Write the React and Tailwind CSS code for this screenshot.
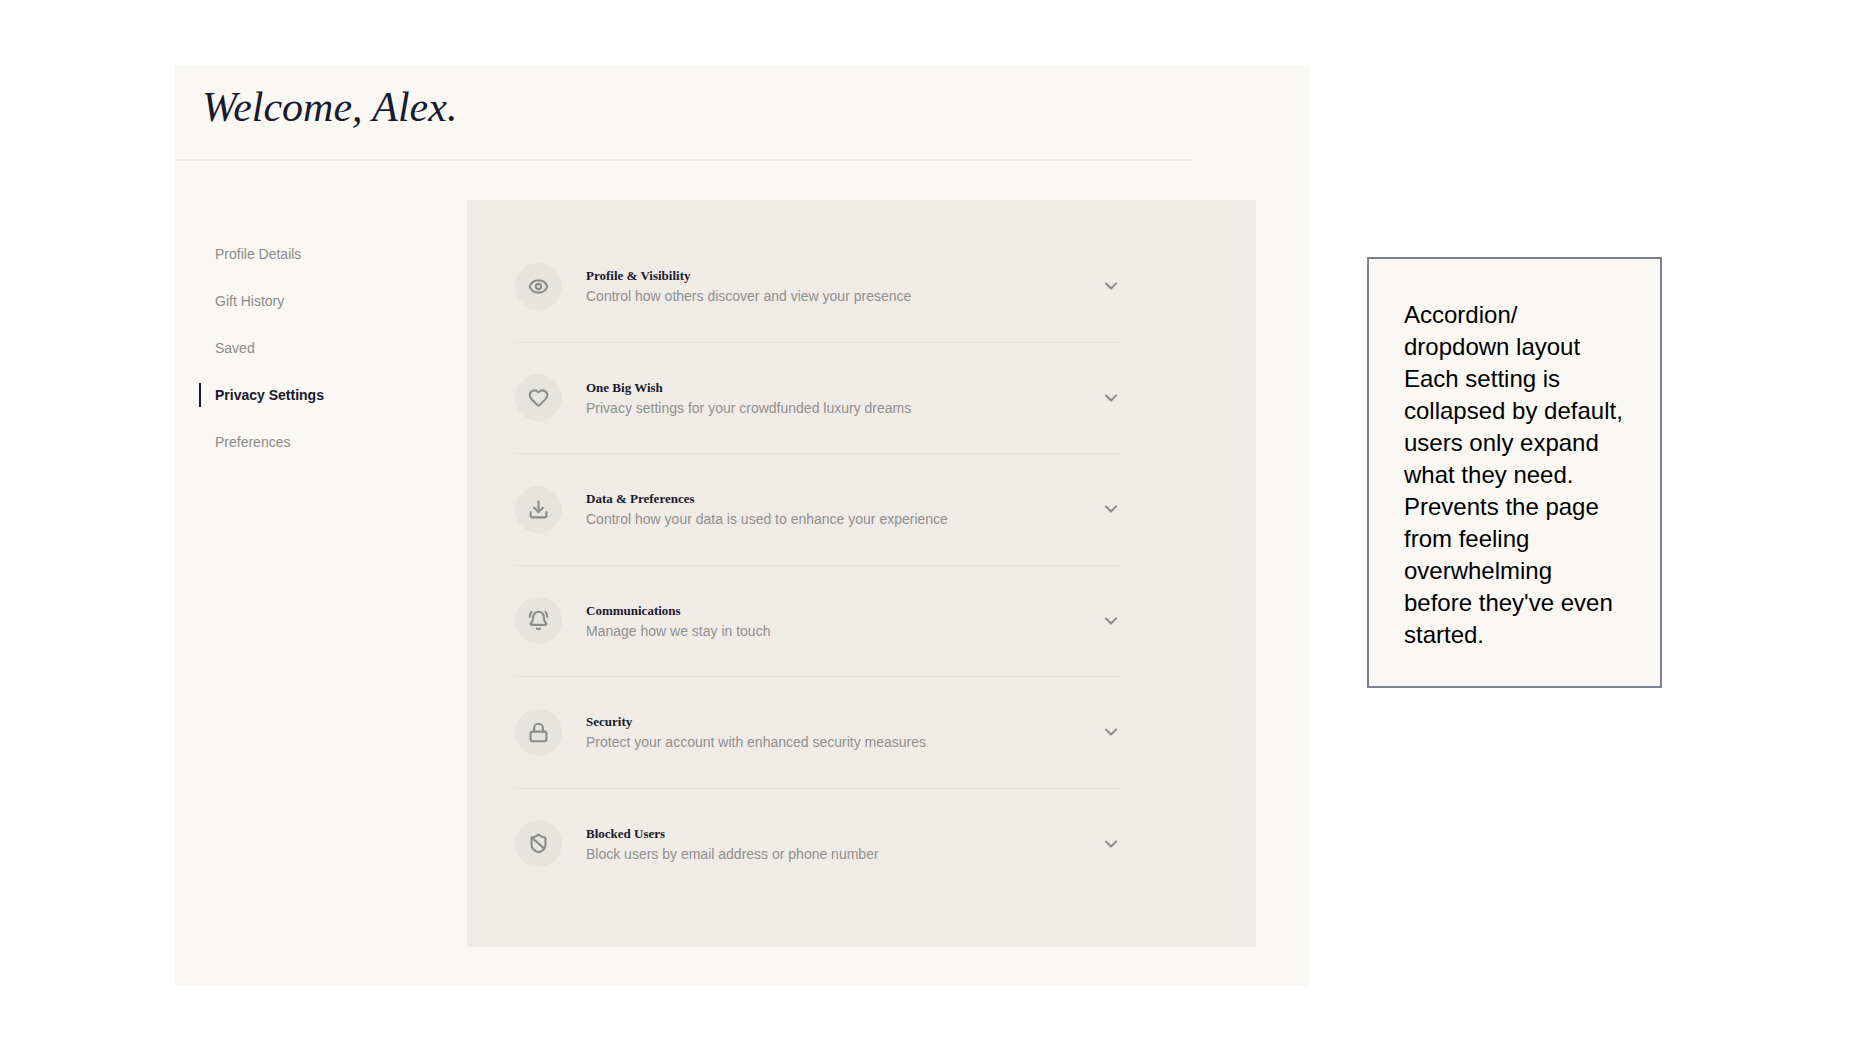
import React, { useState } from 'react';
import { BellRing, ChevronDown, Download, Eye, Heart, Lock, ShieldBan } from 'lucide-react';

const NAV_ITEMS = ['Profile Details', 'Gift History', 'Saved', 'Privacy Settings', 'Preferences'];

const SETTINGS = [
  { icon: Eye, title: 'Profile & Visibility', description: 'Control how others discover and view your presence' },
  { icon: Heart, title: 'One Big Wish', description: 'Privacy settings for your crowdfunded luxury dreams' },
  { icon: Download, title: 'Data & Preferences', description: 'Control how your data is used to enhance your experience' },
  { icon: BellRing, title: 'Communications', description: 'Manage how we stay in touch' },
  { icon: Lock, title: 'Security', description: 'Protect your account with enhanced security measures' },
  { icon: ShieldBan, title: 'Blocked Users', description: 'Block users by email address or phone number' },
];

const NOTE_LINES = [
  'Accordion/',
  'dropdown layout',
  'Each setting is',
  'collapsed by default,',
  'users only expand',
  'what they need.',
  'Prevents the page',
  'from feeling',
  'overwhelming',
  "before they've even",
  'started.',
];

function SideNav({ active, onSelect }) {
  return (
    <nav className="w-[292px] shrink-0 pt-[42px] pl-6">
      <ul className="flex flex-col gap-[23px]">
        {NAV_ITEMS.map((item) => (
          <li key={item}>
            <a
              href="#"
              onClick={() => onSelect(item)}
              className={
                item === active
                  ? 'flex h-6 items-center border-l-2 border-[#1a1a2e] pl-[14px] text-sm font-semibold text-[#1a1a2e]'
                  : 'flex h-6 items-center border-l-2 border-transparent pl-[14px] text-sm font-medium text-[#8b8b8a]'
              }
            >
              {item}
            </a>
          </li>
        ))}
      </ul>
    </nav>
  );
}

function SettingRow({ icon: Icon, title, description, open, onToggle }) {
  return (
    <li className="flex border-b border-[#e5e3df] last:border-transparent">
      <button type="button" aria-expanded={open} onClick={onToggle} className="flex w-full items-center text-left">
        <span className="flex size-[47px] shrink-0 items-center justify-center rounded-full bg-[#e6e4df]">
          <Icon size={21} strokeWidth={2.4} className="text-[#8b8b8a]" />
        </span>
        <span className="ml-6 flex flex-1 flex-col">
          <span className="font-['Liberation_Serif',serif] text-[13px] leading-[21px] font-bold text-[#1a1a2e]">{title}</span>
          <span className="text-sm leading-[21px] text-[#8f8f8e]">{description}</span>
        </span>
        <ChevronDown size={20} strokeWidth={2.4} className={open ? 'rotate-180 text-[#8b8b8a]' : 'text-[#8b8b8a]'} />
      </button>
    </li>
  );
}

export default function App() {
  const [active, setActive] = useState('Privacy Settings');
  const [openRow, setOpenRow] = useState(null);

  return (
    <div className="flex min-h-screen items-start gap-[58px] bg-white pt-[65px] pr-[210px] pb-[65px] pl-[175px] font-['Liberation_Sans',sans-serif]">
      <main className="flex-1 bg-[#f9f8f4] pb-[39px]">
        <header className="mr-[117px] border-b-2 border-[#e9e8e4] pt-[15px] pb-[25px] pl-[27px]">
          <h1 className="font-['Liberation_Serif',serif] text-[42px] leading-[54px] text-[#1a1a2e] italic">Welcome, Alex.</h1>
        </header>

        <div className="flex pt-[39px] pr-[53px]">
          <SideNav active={active} onSelect={setActive} />
          <section className="flex-1 rounded-xs bg-[#efece7] pt-[31px] pr-[135px] pb-[47px] pl-12">
            <ul className="grid min-h-[669px] auto-rows-fr">
              {SETTINGS.map((setting) => (
                <SettingRow
                  key={setting.title}
                  {...setting}
                  open={openRow === setting.title}
                  onToggle={() => setOpenRow(openRow === setting.title ? null : setting.title)}
                />
              ))}
            </ul>
          </section>
        </div>
      </main>

      <aside className="mt-[192px] w-[295px] shrink-0 border-2 border-[#7a8090] bg-[#f9f8f4] pt-10 pb-[35px] pl-[35px]">
        <p className="text-2xl leading-8 text-black">
          {NOTE_LINES.map((line) => (
            <span key={line} className="block">{line}</span>
          ))}
        </p>
      </aside>
    </div>
  );
}
